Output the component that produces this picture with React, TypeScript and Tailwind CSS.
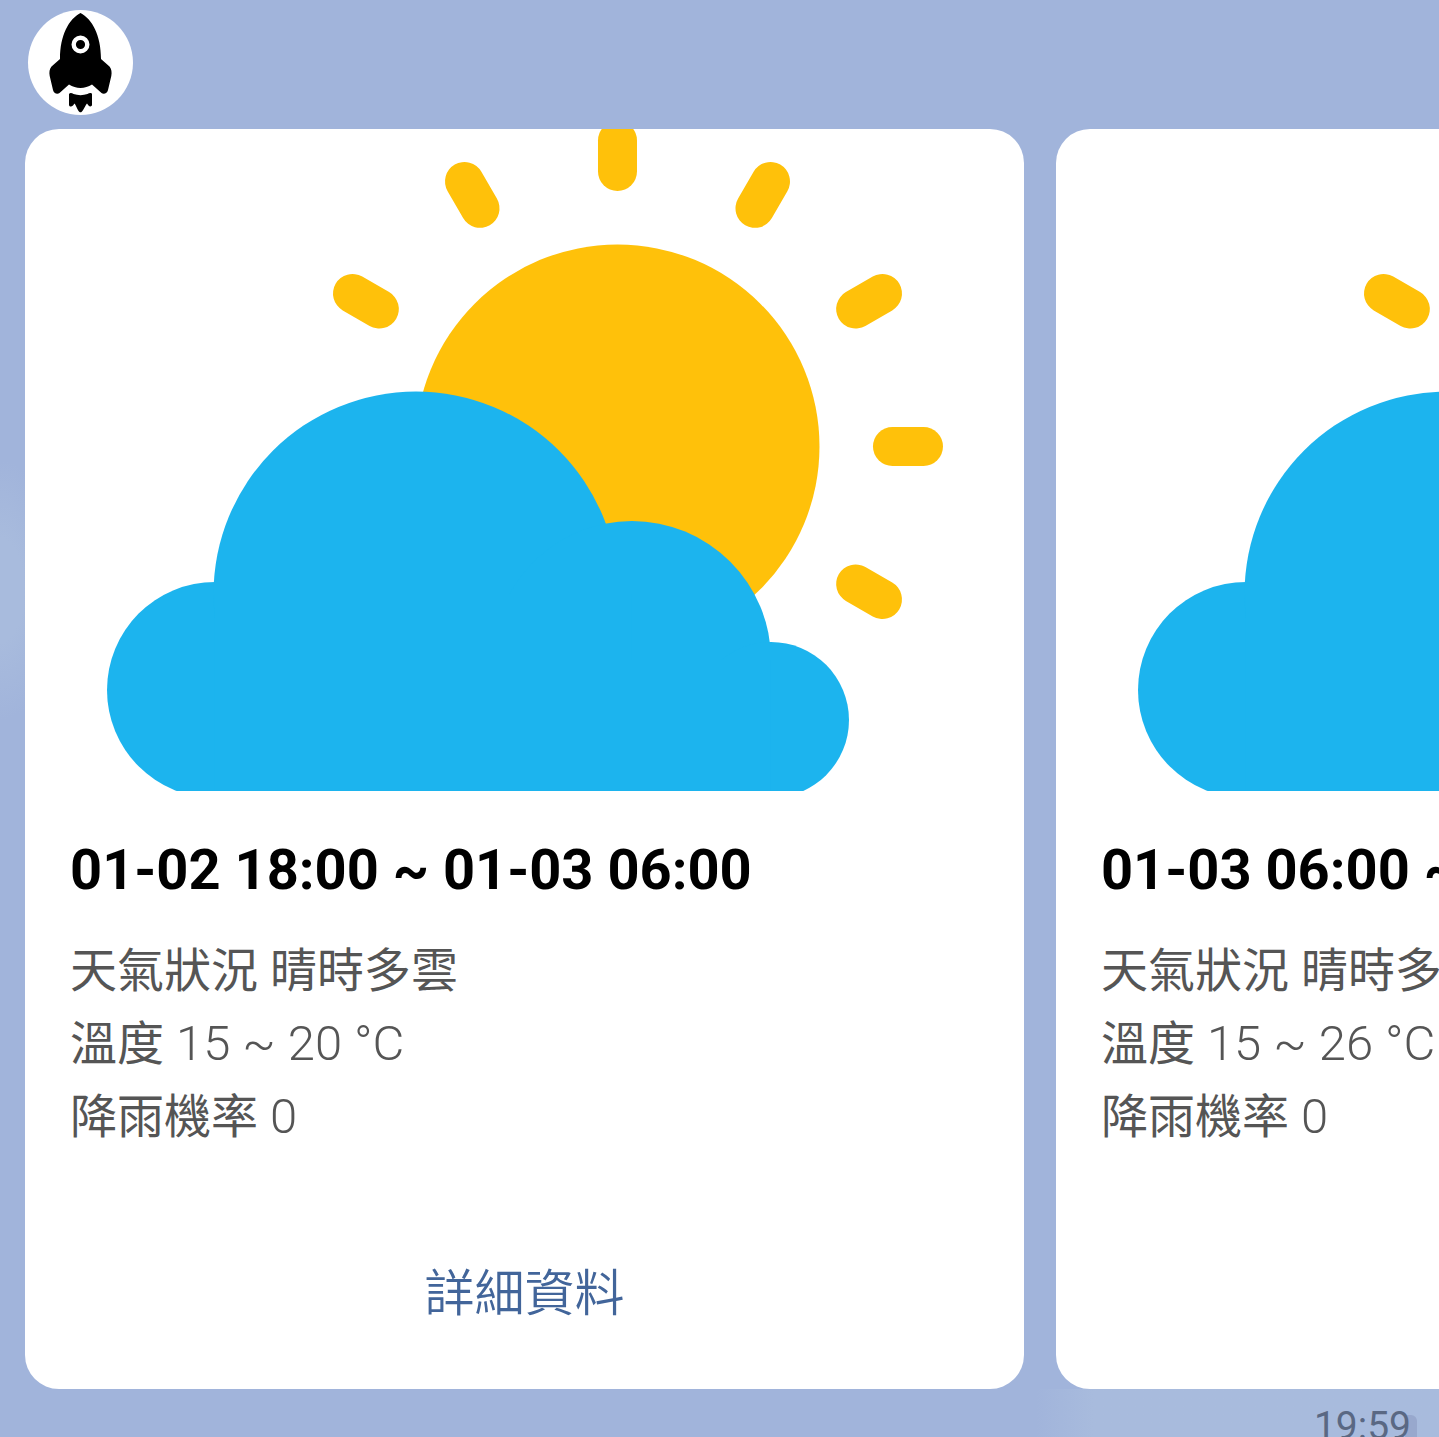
type Forecast = {
  period: string;
  condition: string;
  temperature: string;
  rain: string;
};

const FORECASTS: Forecast[] = [
  { period: "01-02 18:00 ~ 01-03 06:00", condition: "晴時多雲", temperature: "15 ~ 20 °C", rain: "0" },
  { period: "01-03 06:00 ~ 01-03 18:00", condition: "晴時多雲", temperature: "15 ~ 26 °C", rain: "0" },
];

const RAY_ANGLES = [0, 30, -30, -60, -90, -120, -150];

function Rocket() {
  return (
    <svg viewBox="0 0 105 105" className="size-full" role="img" aria-label="Rocket">
      <path
        d="M52.5 3C64 9 73 25 73 49L81.500 56.500C83.500 59 84 62 83.300 66L80 80C79.500 83.500 75.500 84.500 73.500 83L64 74.500C57 79 48 79 41 74.500L31.500 83C29.500 84.500 25.500 83.500 25 80L21.700 66C21 62 21.500 59 23.500 56.500L32 49C32 25 41 9 52.500 3Z"
        fill="#000"
      />
      <circle cx="52.5" cy="34.5" r="6.8" fill="#000" stroke="#fff" strokeWidth="4.4" />
      <path
        d="M41 84C42 82.500 44 83 45.500 84C50 85.500 55 85.500 59.500 84C61 83 63.500 82.500 64 84V95C63.500 97 61.500 96.500 60.500 95.500L59 93.500C57.500 95 55.500 100.500 53.500 102Q52.500 102.500 51.500 102C49.500 100.500 48 95 46.500 93.500L45 95.500C43.500 97 41.500 97 41 95Z"
        fill="#000"
      />
    </svg>
  );
}

function PartlyCloudy() {
  return (
    <svg viewBox="0 0 999 662" className="block w-full" role="img" aria-label="晴時多雲">
      <g transform="translate(592.5 317.5)" fill="#ffc10a" stroke="#ffc10a">
        <circle r="202" stroke="none" />
        {RAY_ANGLES.map((angle) => (
          <line
            key={angle}
            x1="275"
            x2="306"
            strokeWidth="39"
            strokeLinecap="round"
            transform={`rotate(${angle})`}
          />
        ))}
      </g>
      <g fill="#1cb4ee">
        <circle cx="190" cy="561" r="108" />
        <circle cx="391" cy="465" r="202.5" />
        <circle cx="607" cy="531" r="139" />
        <circle cx="746" cy="591" r="78" />
        <path d="M190 465H607V531H746V662H190Z" />
      </g>
    </svg>
  );
}

function Row({ label, value, cjk = false }: { label: string; value: string; cjk?: boolean }) {
  return (
    <p>
      <span className="font-['Noto_Sans_CJK_TC',sans-serif] text-[47px] leading-none font-normal">{label}</span>{" "}
      {cjk ? (
        <span className="font-['Noto_Sans_CJK_TC',sans-serif] text-[47px] leading-none font-normal">{value}</span>
      ) : (
        <span>{value}</span>
      )}
    </p>
  );
}

function ForecastCard({ forecast }: { forecast: Forecast }) {
  return (
    <article className="flex shrink-0 basis-[70.65%] flex-col overflow-hidden rounded-[34px] bg-white">
      <PartlyCloudy />
      <div className="px-[45px] pt-[46px] whitespace-nowrap">
        <h2 className="text-[56px] leading-[66px] font-bold text-black">{forecast.period}</h2>
        <div className="mt-[31px] text-[49px] leading-[73px] font-light text-[#555555]">
          <Row label="天氣狀況" value={forecast.condition} cjk />
          <Row label="溫度" value={forecast.temperature} />
          <Row label="降雨機率" value={forecast.rain} />
        </div>
      </div>
      <button
        type="button"
        className="mt-[86px] mb-[50px] h-[100px] w-full cursor-pointer font-['Noto_Sans_CJK_TC',sans-serif] text-[50px] leading-none font-[350] text-[#42659a]"
      >
        詳細資料
      </button>
    </article>
  );
}

export default function App() {
  return (
    <main className="h-screen overflow-hidden bg-[#a1b4db] bg-[radial-gradient(ellipse_60px_130px_at_0_590px,#a8bbdd_40%,#a1b4db_100%)] font-['Roboto','Noto_Sans_CJK_TC',sans-serif]">
      <header className="px-7 pt-2.5 pb-3.5">
        <div className="size-[105px] overflow-hidden rounded-full bg-white">
          <Rocket />
        </div>
      </header>
      <section className="flex gap-8 overflow-hidden pl-[25px]" aria-label="天氣預報">
        {FORECASTS.map((forecast) => (
          <ForecastCard key={forecast.period} forecast={forecast} />
        ))}
      </section>
      <footer className="flex justify-end bg-linear-to-r from-transparent from-72% to-[#a8bbdd] to-76% pt-3.5 pr-7">
        <time className="relative text-[39px] leading-[46px] text-[#5a6883]">
          <span className="absolute top-3 -right-1.5 h-10 w-3 rounded-tr-md bg-[#98a8cd]" />
          <span className="relative">19:59</span>
        </time>
      </footer>
    </main>
  );
}
